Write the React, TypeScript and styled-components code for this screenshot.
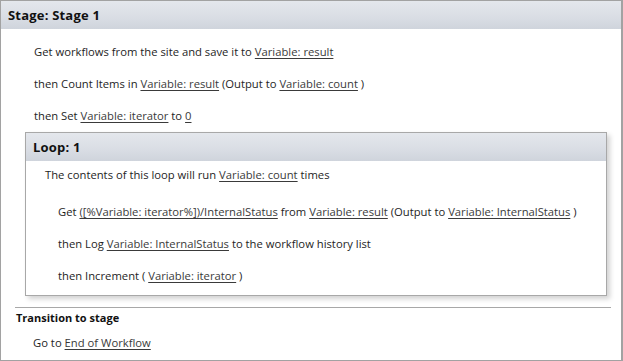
import React from "react";
import styled, { createGlobalStyle } from "styled-components";

const Global = createGlobalStyle`
  html, body { margin: 0; padding: 0; background: #fff; }
  body { font-family: "Open Sans", "Noto Sans", sans-serif; font-size: 11.25px; color: #1e1e1e; }
`;

const Frame = styled.div`
  box-sizing: border-box;
  width: 623px;
  height: 361px;
  border: 1px solid #a2a2a2;
  border-right-width: 2px;
  display: flex;
  flex-direction: column;
  overflow: hidden;
`;

const Header = styled.div<{ $indent: number }>`
  height: 28px;
  flex: none;
  display: flex;
  align-items: center;
  padding-left: ${(p) => p.$indent}px;
  background: linear-gradient(#e4e7ec, #d9dde4 60%, #cfd4dc);
  font-weight: 700;
  font-size: 13px;
  letter-spacing: 0.2px;
  color: #111;
`;

const Body = styled.div`
  display: flex;
  flex-direction: column;
  padding-top: 6px;
`;

const Line = styled.div<{ $indent: number; $h?: number }>`
  height: ${(p) => p.$h ?? 32}px;
  display: flex;
  align-items: center;
  padding-left: ${(p) => p.$indent}px;
  white-space: pre;
`;

const Link = styled.span`
  text-decoration: underline;
  text-underline-offset: 2px;
  color: #3a3a3a;
`;

const LoopBox = styled.div`
  margin: 1px 14px 0 24px;
  border: 1px solid #a8a8a8;
  box-shadow: 3px 3px 5px rgba(0, 0, 0, 0.18);
  display: flex;
  flex-direction: column;
  padding-bottom: 4px;
`;

const LoopLines = styled.div`
  display: flex;
  flex-direction: column;
  padding-top: 8px;
`;

const Divider = styled.div`
  margin: 11px 10px 0 14px;
  border-top: 1px solid #a8a8a8;
`;

const Transition = styled.div`
  padding-left: 15px;
  height: 18px;
  display: flex;
  align-items: center;
  font-weight: 700;
  font-size: 11px;
  color: #111;
`;

export default function App() {
  return (
    <>
      <Global />
      <Frame>
        <Header $indent={7}>Stage: Stage 1</Header>
        <Body>
          <Line $indent={33}>
            Get workflows from the site and save it to <Link>Variable: result</Link>
          </Line>
          <Line $indent={33}>
            then Count Items in <Link>Variable: result</Link> (Output to <Link>Variable: count</Link> )
          </Line>
          <Line $indent={33}>
            then Set <Link>Variable: iterator</Link> to <Link>0</Link>
          </Line>
        </Body>
        <LoopBox>
          <Header $indent={7}>Loop: 1</Header>
          <Line $indent={19} $h={26}>
            The contents of this loop will run <Link>Variable: count</Link> times
          </Line>
          <LoopLines>
            <Line $indent={32}>
              Get <Link>([%Variable: iterator%])/InternalStatus</Link> from <Link>Variable: result</Link> (Output to <Link>Variable: InternalStatus</Link> )
            </Line>
            <Line $indent={32}>
              then Log <Link>Variable: InternalStatus</Link> to the workflow history list
            </Line>
            <Line $indent={32}>
              then Increment ( <Link>Variable: iterator</Link> )
            </Line>
          </LoopLines>
        </LoopBox>
        <Divider />
        <Transition>Transition to stage</Transition>
        <Line $indent={32} $h={32}>
          Go to <Link>End of Workflow</Link>
        </Line>
      </Frame>
    </>
  );
}
